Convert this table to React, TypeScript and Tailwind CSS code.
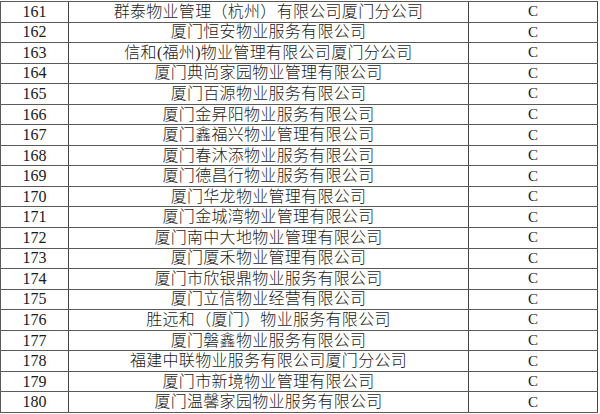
const ROWS: [number, string][] = [
  [161, '群泰物业管理（杭州）有限公司厦门分公司'],
  [162, '厦门恒安物业服务有限公司'],
  [163, '信和(福州)物业管理有限公司厦门分公司'],
  [164, '厦门典尚家园物业管理有限公司'],
  [165, '厦门百源物业服务有限公司'],
  [166, '厦门金昇阳物业服务有限公司'],
  [167, '厦门鑫福兴物业管理有限公司'],
  [168, '厦门春沐添物业服务有限公司'],
  [169, '厦门德昌行物业服务有限公司'],
  [170, '厦门华龙物业管理有限公司'],
  [171, '厦门金城湾物业管理有限公司'],
  [172, '厦门南中大地物业管理有限公司'],
  [173, '厦门厦禾物业管理有限公司'],
  [174, '厦门市欣银鼎物业服务有限公司'],
  [175, '厦门立信物业经营有限公司'],
  [176, '胜远和（厦门）物业服务有限公司'],
  [177, '厦门磐鑫物业服务有限公司'],
  [178, '福建中联物业服务有限公司厦门分公司'],
  [179, '厦门市新境物业管理有限公司'],
  [180, '厦门温馨家园物业服务有限公司'],
];

export default function App() {
  return (
    <div className="w-[600px] h-[414px] bg-white pt-px text-[#1a1a1a]">
      <div className="w-[598px] border-t border-[#5a5a5a]">
        {ROWS.map(([n, name]) => (
          <div key={n} className="flex h-[20.55px] border-l border-b border-[#5a5a5a]">
            <div className="w-[68px] border-r border-[#444] flex items-center justify-center text-[16px] leading-none font-['Liberation_Serif',serif]">
              {n}
            </div>
            <div className="w-[400px] border-r border-[#444] flex items-center justify-center text-[16px] leading-none font-light tracking-[0.3px] font-['Liberation_Serif','Noto_Sans_CJK_SC',serif]">
              {name}
            </div>
            <div className="w-[129px] border-r border-[#444] flex items-center justify-center text-[15px] leading-none font-['Liberation_Serif',serif]">
              C
            </div>
          </div>
        ))}
      </div>
    </div>
  );
}
